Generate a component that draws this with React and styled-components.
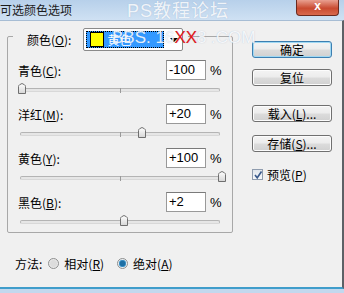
import styled, { createGlobalStyle } from 'styled-components'

const Global = createGlobalStyle`
  html, body { margin: 0; padding: 0; background: #f0f0f0; }
  * { box-sizing: border-box; }
`

const cjk = `"Noto Sans CJK SC", "Noto Sans", sans-serif`

const channels = [
  { label: '青色', key: 'C', value: -100 },
  { label: '洋红', key: 'M', value: 20 },
  { label: '黄色', key: 'Y', value: 100 },
  { label: '黑色', key: 'B', value: 2 },
]

const fmt = (v) => (v > 0 ? `+${v}` : `${v}`)

const Thumb = () => (
  <svg width="8" height="11" viewBox="0 0 8 11">
    <defs>
      <linearGradient id="tg" x1="0" x2="0" y1="0" y2="1">
        <stop offset="0" stopColor="#ffffff" />
        <stop offset="1" stopColor="#d6d6d6" />
      </linearGradient>
    </defs>
    <path d="M0.5 3.5 Q0.5 2.5 1.5 1.8 L4 0.5 L6.5 1.8 Q7.5 2.5 7.5 3.5 V10.5 H0.5 Z" fill="url(#tg)" stroke="#6f6f6f" />
  </svg>
)

const App = () => {
  return (
    <Window>
      <Global />
      <TitleBar>
        <Title>可选颜色选项</Title>
        <CloseBtn>x</CloseBtn>
      </TitleBar>
      <Body>
        <LeftPane>
          <Group>
            <GroupHead>
              <Label>颜色(<u>O</u>):</Label>
              <Select>
                <Selected>
                  <Swatch />
                  <span>黄色</span>
                </Selected>
                <Arrow />
              </Select>
            </GroupHead>
            {channels.map((c) => (
              <Section key={c.key}>
                <InputRow>
                  <Label>
                    {c.label}(<u>{c.key}</u>):
                  </Label>
                  <NumBox>{fmt(c.value)}</NumBox>
                  <Pct>%</Pct>
                </InputRow>
                <SliderRow>
                  <Track>
                    <Tick />
                    <ThumbWrap style={{ left: `${c.value + 100 - 3}px` }}>
                      <Thumb />
                    </ThumbWrap>
                  </Track>
                </SliderRow>
              </Section>
            ))}
          </Group>
          <MethodRow>
            <Label>方法:</Label>
            <RadioItem>
              <Radio />
              <Label>相对(<u>R</u>)</Label>
            </RadioItem>
            <RadioItem>
              <Radio $on />
              <Label>绝对(<u>A</u>)</Label>
            </RadioItem>
          </MethodRow>
        </LeftPane>
        <RightPane>
          <Button $default $top={20}>确定</Button>
          <Button $top={11}>复位</Button>
          <Button $top={19}>载入(<u>L</u>)...</Button>
          <Button $top={13}>存储(<u>S</u>)...</Button>
          <CheckRow>
            <Check>
              <svg width="10" height="10" viewBox="0 0 10 10">
                <path d="M2 5 L4.2 7.8 L8.5 1.5" fill="none" stroke="#3a5a8c" strokeWidth="1.6" />
              </svg>
            </Check>
            <Label>预览(<u>P</u>)</Label>
          </CheckRow>
        </RightPane>
      </Body>
      <Watermark>
        <WmTop>PS教程论坛</WmTop>
        <WmBottom>
          BBS. 16<Red>XX</Red>8 .COM
        </WmBottom>
      </Watermark>
    </Window>
  )
}

const Window = styled.div`
  width: 344px;
  height: 293px;
  position: relative;
  overflow: hidden;
  display: flex;
  flex-direction: column;
  font-family: ${cjk};
  font-size: 12px;
  color: #000;
  background: #c9dcf0;
  border-bottom: 4px solid #c2d8ee;
`

const TitleBar = styled.div`
  height: 20px;
  flex: none;
  display: flex;
  justify-content: space-between;
  align-items: flex-start;
  background: linear-gradient(#b7d0ea, #cfe1f3);
`

const Title = styled.div`
  line-height: 20px;
  font-size: 12px;
  color: #1a1a1a;
`

const CloseBtn = styled.div`
  width: 43px;
  height: 16px;
  margin-right: 5px;
  border: 1px solid #6b2a1f;
  border-top: none;
  border-radius: 0 0 4px 4px;
  background: linear-gradient(#e9a090, #c94a30 55%, #d8694d);
  color: #fff;
  font-family: "Liberation Sans", sans-serif;
  font-weight: bold;
  font-size: 12px;
  line-height: 13px;
  text-align: center;
`

const Body = styled.div`
  flex: 1;
  display: flex;
  background: #f0f0f0;
  border-top: 1px solid #a7bdd4;
  border-right: 2px solid #5d6166;
  border-bottom: 2px solid #3f9dcb;
`

const LeftPane = styled.div`
  width: 233px;
  padding-left: 7px;
  display: flex;
  flex-direction: column;
`

const Group = styled.div`
  margin-top: 15px;
  width: 226px;
  height: 197px;
  border: 1px solid #a8a8a8;
  border-radius: 2px;
  padding: 0 10px;
  display: flex;
  flex-direction: column;
`

const GroupHead = styled.div`
  align-self: flex-start;
  margin: -9px 0 9px -5px;
  padding: 0 5px 0 14px;
  height: 23px;
  background: #f0f0f0;
  display: flex;
  align-items: center;
  gap: 12px;
`

const Label = styled.span`
  font-family: ${cjk};
  font-size: 12px;
  white-space: nowrap;
  u { text-decoration: underline; }
`

const Select = styled.div`
  width: 100px;
  height: 23px;
  border: 1px solid #8a8a8a;
  border-radius: 2px;
  background: #fff;
  padding: 2px;
  display: flex;
  align-items: center;
`

const Selected = styled.div`
  width: 78px;
  height: 100%;
  background: #3399ff;
  outline: 1px dotted #000;
  outline-offset: -1px;
  color: #fff;
  display: flex;
  align-items: center;
  gap: 3px;
  padding-left: 4px;
`

const Swatch = styled.span`
  width: 14px;
  height: 15px;
  background: #ffff00;
  border: 1px solid #000;
`

const Arrow = styled.span`
  margin-left: 6px;
  width: 0;
  height: 0;
  border-left: 4px solid transparent;
  border-right: 4px solid transparent;
  border-top: 4px solid #000;
`

const Section = styled.div`
  display: flex;
  flex-direction: column;
  margin-bottom: 4px;
`

const InputRow = styled.div`
  height: 20px;
  display: flex;
  align-items: center;
  ${Label} { flex: 1; }
`

const NumBox = styled.div`
  width: 40px;
  height: 20px;
  border: 1px solid #999;
  border-top-color: #7a7a7a;
  background: #fff;
  font-family: "Liberation Sans", Arial, sans-serif;
  font-size: 13px;
  line-height: 18px;
  padding-left: 2px;
`

const Pct = styled.span`
  width: 12px;
  margin-left: 4px;
  font-family: "Liberation Sans", Arial, sans-serif;
  font-size: 13px;
`

const SliderRow = styled.div`
  height: 20px;
  display: flex;
  align-items: center;
  padding-left: 2px;
`

const Track = styled.div`
  position: relative;
  width: 200px;
  height: 4px;
  border: 1px solid #b4b4b4;
  border-bottom-color: #d8d8d8;
  border-radius: 2px;
  background: #e6e6e6;
`

const Tick = styled.span`
  position: absolute;
  left: 99px;
  top: -1px;
  width: 1px;
  height: 5px;
  background: #9a9a9a;
`

const ThumbWrap = styled.span`
  position: absolute;
  top: -6px;
  line-height: 0;
`

const MethodRow = styled.div`
  margin-top: 22px;
  padding-left: 8px;
  height: 16px;
  display: flex;
  align-items: center;
  gap: 6px;
`

const RadioItem = styled.span`
  display: flex;
  align-items: center;
  gap: 5px;
  margin-right: 7px;
`

const Radio = styled.span`
  width: 11px;
  height: 11px;
  border-radius: 50%;
  border: 1px solid #8e8f8f;
  background: ${(p) =>
    p.$on
      ? 'radial-gradient(circle, #1d6fa5 0 2.5px, #5aa8d8 3.5px, #e8eef2 4px)'
      : 'radial-gradient(circle, #dcdcdc 0 3px, #f4f4f4 5px)'};
`

const RightPane = styled.div`
  flex: 1;
  padding-left: 19px;
  display: flex;
  flex-direction: column;
`

const Button = styled.div`
  width: 80px;
  height: 17px;
  margin-top: ${(p) => p.$top}px;
  border: 1px solid ${(p) => (p.$default ? '#3c7fb1' : '#707070')};
  border-radius: 3px;
  background: linear-gradient(#f4f4f4, #ececec 48%, #dcdcdc 52%, #d0d0d0);
  box-shadow: ${(p) => (p.$default ? 'inset 0 0 0 1px #9fd8f3' : 'inset 0 0 0 1px #fcfcfc')};
  font-size: 12px;
  line-height: 15px;
  text-align: center;
  u { text-decoration: underline; }
`

const CheckRow = styled.div`
  margin-top: 14px;
  display: flex;
  align-items: center;
  gap: 4px;
`

const Check = styled.span`
  width: 11px;
  height: 11px;
  border: 1px solid #8f9cae;
  background: linear-gradient(#dfe5ec, #f6f8fa);
  line-height: 0;
`

const Watermark = styled.div`
  position: absolute;
  left: 112px;
  top: 0;
  pointer-events: none;
  color: rgba(255, 255, 255, 0.85);
  text-shadow: 0 0 1px rgba(120, 150, 190, 0.5);
  font-family: "Liberation Sans", ${cjk};
`

const WmTop = styled.div`
  font-size: 18px;
  line-height: 22px;
  margin-left: 15px;
  letter-spacing: 1px;
`

const WmBottom = styled.div`
  font-size: 17px;
  line-height: 20px;
  margin-top: 6px;
  white-space: nowrap;
`

const Red = styled.span`
  color: #e81818;
`

export default App
